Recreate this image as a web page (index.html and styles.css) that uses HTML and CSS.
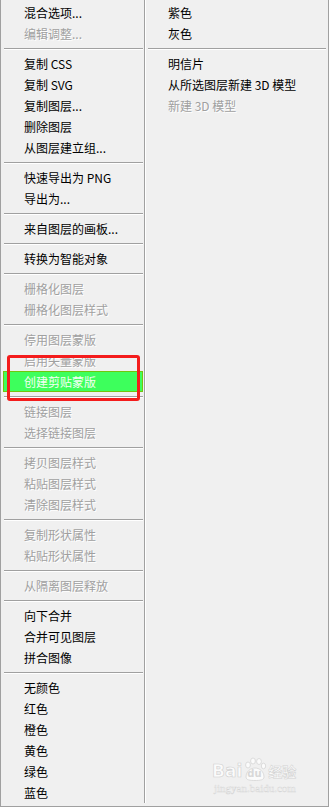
FILE: index.html
```html
<!DOCTYPE html>
<html lang="zh-CN">
<head>
    <meta charset="UTF-8">
    <meta name="viewport" content="width=device-width, initial-scale=1.0">
    <title>图层菜单</title>
    <link rel="stylesheet" href="styles.css">
</head>
<body>

<div class="menu">
    <ul class="col col-left">
        <li class="item">混合选项...</li>
        <li class="item off">编辑调整...</li>
        <li class="sep"></li>
        <li class="item">复制 CSS</li>
        <li class="item">复制 SVG</li>
        <li class="item">复制图层...</li>
        <li class="item">删除图层</li>
        <li class="item">从图层建立组...</li>
        <li class="sep"></li>
        <li class="item">快速导出为 PNG</li>
        <li class="item">导出为...</li>
        <li class="sep"></li>
        <li class="item">来自图层的画板...</li>
        <li class="sep"></li>
        <li class="item">转换为智能对象</li>
        <li class="sep"></li>
        <li class="item off">栅格化图层</li>
        <li class="item off">栅格化图层样式</li>
        <li class="sep"></li>
        <li class="item off">停用图层蒙版</li>
        <li class="item off">启用矢量蒙版</li>
        <li class="item active">创建剪贴蒙版</li>
        <li class="sep"></li>
        <li class="item off">链接图层</li>
        <li class="item off">选择链接图层</li>
        <li class="sep"></li>
        <li class="item off">拷贝图层样式</li>
        <li class="item off">粘贴图层样式</li>
        <li class="item off">清除图层样式</li>
        <li class="sep"></li>
        <li class="item off">复制形状属性</li>
        <li class="item off">粘贴形状属性</li>
        <li class="sep"></li>
        <li class="item off">从隔离图层释放</li>
        <li class="sep"></li>
        <li class="item">向下合并</li>
        <li class="item">合并可见图层</li>
        <li class="item">拼合图像</li>
        <li class="sep"></li>
        <li class="item">无颜色</li>
        <li class="item">红色</li>
        <li class="item">橙色</li>
        <li class="item">黄色</li>
        <li class="item">绿色</li>
        <li class="item">蓝色</li>
    </ul>

    <ul class="col col-right">
        <li class="item">紫色</li>
        <li class="item">灰色</li>
        <li class="sep"></li>
        <li class="item">明信片</li>
        <li class="item">从所选图层新建 3D 模型</li>
        <li class="item off">新建 3D 模型</li>
    </ul>

    <!-- red marker drawn over the menu -->
    <div class="marker"></div>

    <!-- watermark -->
    <div class="mark">
        <div class="mark-logo">
            <span class="mark-bai">Bai</span>
            <span class="mark-paw">
                <svg width="24" height="24" viewBox="0 0 24 24">
                    <g fill="#fbfbfb" stroke="#d4d4d4" stroke-width="0.8">
                        <ellipse cx="5" cy="8" rx="2.4" ry="3"/>
                        <ellipse cx="10" cy="4" rx="2.4" ry="3"/>
                        <ellipse cx="16" cy="4.5" rx="2.4" ry="3"/>
                        <ellipse cx="20.5" cy="9" rx="2.2" ry="2.8"/>
                        <path d="M3 20 C3 14 8 11 12 11 C16 11 21 14 21 20 C21 23 17 23.5 12 23.5 C7 23.5 3 23 3 20 Z"/>
                    </g>
                </svg>
                <span class="mark-du">du</span>
            </span>
            <span class="mark-cn">经验</span>
        </div>
        <div class="mark-url">jingyan.baidu.com</div>
    </div>
</div>

</body>
</html>
```

FILE: styles.css
```css
html, body {
    margin: 0;
    padding: 0;
    background: #f0f0f0;
}

body {
    font-family: "Noto Sans CJK SC", "Microsoft YaHei", sans-serif;
    font-size: 12px;
    color: #000;
}

.menu {
    position: relative;
    box-sizing: border-box;
    width: 329px;
    height: 807px;
    display: flex;
    align-items: stretch;
    background: #f0f0f0;
    border: 1px solid #a0a0a0;
    border-top: none;
    padding-bottom: 3px;
    overflow: hidden;
}

.col {
    list-style: none;
    margin: 0;
    padding: 2px 0 0;
}

.col-left {
    box-sizing: border-box;
    width: 144px;
    flex: none;
    border-right: 1px solid #a0a0a0;
}

.col-right {
    flex: 1;
    border-left: 1px solid #ffffff;
}

.item {
    height: 21px;
    line-height: 21px;
    white-space: nowrap;
}

.col-left .item {
    padding-left: 23px;
}

.col-right .item {
    padding-left: 22px;
}

.item.off {
    color: #a0a0a0;
    text-shadow: 1px 1px 0 #ffffff;
}

.col-left .item.active {
    box-sizing: border-box;
    margin: 0 1px 0 2px;
    padding-left: 20px;
    line-height: 19px;
    background: #3dff5c;
    border: 1px solid #72c50e;
    color: #f4fff4;
}

.sep {
    height: 9px;
    box-sizing: border-box;
    padding-top: 4px;
}

.sep::after {
    content: "";
    display: block;
    height: 0;
    border-top: 1px solid #a0a0a0;
    border-bottom: 1px solid #ffffff;
}

.col-left .sep {
    margin: 0 1px 0 3px;
}

.col-right .sep {
    margin: 0 2px 0 2px;
}

.marker {
    position: absolute;
    left: 6px;
    top: 355px;
    width: 133px;
    height: 46px;
    box-sizing: border-box;
    border: 3px solid #f41c1c;
    border-radius: 3px;
}

.mark {
    position: absolute;
    left: 211px;
    top: 751px;
    width: 92px;
    text-align: center;
}

.mark-logo {
    display: flex;
    align-items: flex-end;
    height: 30px;
}

.mark-bai {
    font-family: "DejaVu Sans", sans-serif;
    font-weight: bold;
    font-size: 17px;
    line-height: 18px;
    color: #fbfbfb;
    -webkit-text-stroke: 0.6px #d0d0d0;
    margin-bottom: 1px;
}

.mark-paw {
    position: relative;
    width: 24px;
    height: 26px;
    margin: 0 1px;
}

.mark-paw svg {
    position: absolute;
    left: 0;
    top: 2px;
}

.mark-du {
    position: absolute;
    left: 4px;
    top: 13px;
    font-family: "DejaVu Sans", sans-serif;
    font-weight: bold;
    font-size: 10px;
    line-height: 11px;
    color: #d8d8d8;
}

.mark-cn {
    font-size: 14px;
    line-height: 18px;
    font-weight: bold;
    color: #fbfbfb;
    -webkit-text-stroke: 0.5px #d0d0d0;
    margin-bottom: 1px;
}

.mark-url {
    font-family: "Liberation Serif", serif;
    font-size: 11px;
    line-height: 14px;
    color: #fbfbfb;
    -webkit-text-stroke: 0.4px #d4d4d4;
    text-align: left;
    padding-left: 2px;
}
```
